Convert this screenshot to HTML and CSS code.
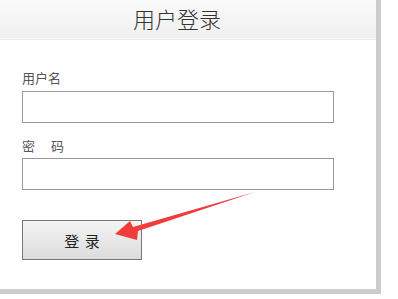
FILE: index.html
```html
<!DOCTYPE html>
<html lang="zh">
<head>
   <meta charset="utf-8"/>
   <title>用户登录</title>
   <link rel="stylesheet" href="styles.css">
</head>
<body>
   <div class='panel'>
      <div class='head'>用户登录</div>
      <div class='body'>
         <div class='label'>用户名</div>
         <input class='field' type='text'/>
         <div class='label pw'>密 码</div>
         <input class='field' type='password'/>
         <button class='btn'>登 录</button>
      </div>
   </div>
   <svg class='arrow' width='398' height='299' viewBox='0 0 398 299'>
      <polygon points='255,192 138,231 137,240 115,234 130,221 133,227' fill='#f23b3b'/>
   </svg>
</body>
</html>
```

FILE: styles.css
```css
body {
   margin:0;
   background:#fff;
   font-family:"Noto Sans CJK SC","Microsoft YaHei",sans-serif;
   color:#555;
}
.panel {
   width:376px;
   height:289px;
   border-right:5px solid #cdcdcd;
   border-bottom:5px solid #cdcdcd;
   box-sizing:content-box;
}
.head {
   height:38px;
   line-height:36px;
   text-align:center;
   padding-right:22px;
   font-size:22px;
   font-weight:300;
   color:#333;
   background:linear-gradient(#fafafa,#f0f0f1);
   border-bottom:1px solid #f7f7f7;
   box-shadow:0 1px 0 #ececec;
}
.body {
   padding:31px 0 0 22px;
}
.label {
   font-size:13px;
   line-height:16px;
   height:21px;
}
.label.pw {
   margin-top:15px;
   word-spacing:13px;
   height:20px;
}
.field {
   display:block;
   margin:0;
   width:312px;
   height:32px;
   box-sizing:border-box;
   border:1px solid #999;
   padding:0 4px;
}
.btn {
   display:block;
   margin-top:30px;
   width:120px;
   height:40px;
   border:1px solid #777;
   background:linear-gradient(#f4f4f4,#dcdcdc);
   font-family:"Noto Sans CJK SC",sans-serif;
   font-size:15px;
   color:#222;
   word-spacing:2px;
   padding:0;
}
.arrow {
   position:absolute;
   left:0;
   top:0;
   pointer-events:none;
}
```
